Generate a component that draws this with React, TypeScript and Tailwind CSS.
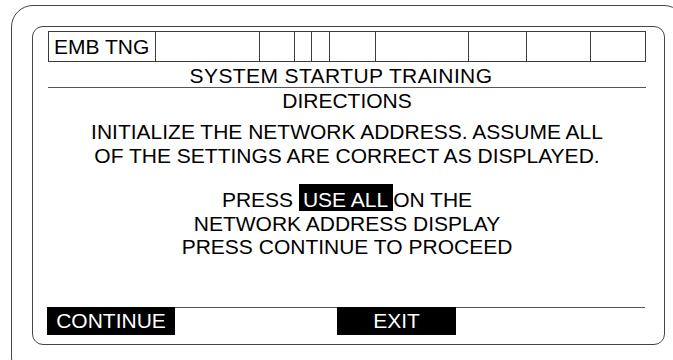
const cols = [
  { w: "w-[107px]", label: "EMB TNG" },
  { w: "w-[104px]" },
  { w: "w-[35px]" },
  { w: "w-[17px]" },
  { w: "w-[18px]" },
  { w: "w-[46px]" },
  { w: "w-[93px]" },
  { w: "w-[58px]" },
  { w: "w-[64px]" },
  { w: "w-[54px]" },
];

export default function App() {
  return (
    <div
      className="w-[673px] h-[360px] overflow-hidden bg-white pl-[11px] pt-[5px] text-black"
      style={{ fontFamily: '"Liberation Sans", Arial, sans-serif' }}
    >
      {/* outer bezel */}
      <div className="w-[675px] h-[375px] rounded-[22px] border border-[#454545] pl-[20px] pt-[20px]">
        {/* screen */}
        <div className="w-[633px] h-[319px] rounded-[11px] border border-[#454545] pl-[15px] pt-[4px] pb-[9px] flex flex-col">
          <div className="w-[598px] flex flex-col">
            {/* status table */}
            <div className="flex h-[31px] border border-[#3c3c3c]">
              {cols.map((c, i) => (
                <div
                  key={i}
                  className={`${c.w} h-full ${i < cols.length - 1 ? "border-r border-[#3c3c3c]" : ""} text-[21px] leading-[29px] pl-[5px] whitespace-nowrap`}
                >
                  {c.label}
                </div>
              ))}
            </div>

            <div className="h-[26px] border-b border-[#555] text-center text-[21px] leading-[25px] pt-[1px] pr-[12px] tracking-[0.4px]">
              SYSTEM STARTUP TRAINING
            </div>

            <div className="mt-[1px] text-center text-[21px] leading-[23px]">DIRECTIONS</div>

            <div className="mt-[8px] text-center text-[21px] leading-[23.5px]">
              <div>INITIALIZE THE NETWORK ADDRESS. ASSUME ALL</div>
              <div>OF THE SETTINGS ARE CORRECT AS DISPLAYED.</div>
            </div>

            <div className="mt-[21px] text-center text-[21px] leading-[23.5px]">
              <div>
                PRESS <span className="bg-black text-white pl-[4px] pr-[5px] pt-[4px]">USE ALL</span>ON THE
              </div>
              <div>NETWORK ADDRESS DISPLAY</div>
              <div>PRESS CONTINUE TO PROCEED</div>
            </div>
          </div>

          {/* softkey row */}
          <div className="mt-auto w-[598px] ml-[-1px] flex border-t border-[#555]">
            <div className="-mt-px w-[128px] h-[28px] bg-black text-white text-[21px] leading-[28px] text-center">
              CONTINUE
            </div>
            <div className="-mt-px ml-[162px] w-[119px] h-[28px] bg-black text-white text-[21px] leading-[28px] text-center">
              EXIT
            </div>
          </div>
        </div>
      </div>
    </div>
  );
}
